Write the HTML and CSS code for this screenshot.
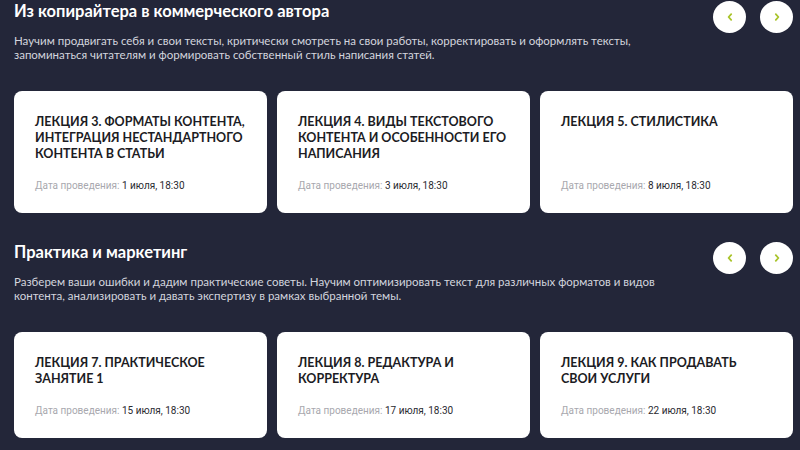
FILE: index.html
```html
<!DOCTYPE html>
<html lang="ru">
<head>
<meta charset="utf-8">
<link rel="stylesheet" href="styles.css">
</head>
<body>
<div class="page">
  <section class="block">
    <div class="head">
      <h2 class="title">Из копирайтера в коммерческого автора</h2>
      <div class="nav">
        <button class="arrow"><svg viewBox="0 0 10 10" width="10" height="10"><path d="M6.2 2.2 L3.6 5 L6.2 7.8" fill="none" stroke="#a9c42b" stroke-width="1.8" stroke-linecap="round" stroke-linejoin="round"/></svg></button>
        <button class="arrow"><svg viewBox="0 0 10 10" width="10" height="10"><path d="M3.8 2.2 L6.4 5 L3.8 7.8" fill="none" stroke="#a9c42b" stroke-width="1.8" stroke-linecap="round" stroke-linejoin="round"/></svg></button>
      </div>
    </div>
    <p class="desc">Научим продвигать себя и свои тексты, критически смотреть на свои работы, корректировать и оформлять тексты,<br>запоминаться читателям и формировать собственный стиль написания статей.</p>
    <div class="cards">
      <div class="card">
        <h3 class="card-title">Лекция 3. Форматы контента, интеграция нестандартного контента в статьи</h3>
        <p class="date"><span class="label">Дата проведения:</span> 1 июля, 18:30</p>
      </div>
      <div class="card">
        <h3 class="card-title">Лекция 4. Виды текстового контента и особенности его написания</h3>
        <p class="date"><span class="label">Дата проведения:</span> 3 июля, 18:30</p>
      </div>
      <div class="card">
        <h3 class="card-title">Лекция 5. Стилистика</h3>
        <p class="date"><span class="label">Дата проведения:</span> 8 июля, 18:30</p>
      </div>
    </div>
  </section>
  <section class="block">
    <div class="head">
      <h2 class="title">Практика и маркетинг</h2>
      <div class="nav">
        <button class="arrow"><svg viewBox="0 0 10 10" width="10" height="10"><path d="M6.2 2.2 L3.6 5 L6.2 7.8" fill="none" stroke="#a9c42b" stroke-width="1.8" stroke-linecap="round" stroke-linejoin="round"/></svg></button>
        <button class="arrow"><svg viewBox="0 0 10 10" width="10" height="10"><path d="M3.8 2.2 L6.4 5 L3.8 7.8" fill="none" stroke="#a9c42b" stroke-width="1.8" stroke-linecap="round" stroke-linejoin="round"/></svg></button>
      </div>
    </div>
    <p class="desc">Разберем ваши ошибки и дадим практические советы. Научим оптимизировать текст для различных форматов и видов<br>контента, анализировать и давать экспертизу в рамках выбранной темы.</p>
    <div class="cards">
      <div class="card">
        <h3 class="card-title">Лекция 7. Практическое занятие 1</h3>
        <p class="date"><span class="label">Дата проведения:</span> 15 июля, 18:30</p>
      </div>
      <div class="card">
        <h3 class="card-title">Лекция 8. Редактура и корректура</h3>
        <p class="date"><span class="label">Дата проведения:</span> 17 июля, 18:30</p>
      </div>
      <div class="card">
        <h3 class="card-title">Лекция 9. Как продавать свои услуги</h3>
        <p class="date"><span class="label">Дата проведения:</span> 22 июля, 18:30</p>
      </div>
    </div>
  </section>
</div>
</body>
</html>
```

FILE: styles.css
```css
* { box-sizing: border-box; }
html, body {
  margin: 0;
  padding: 0;
  background: #232639;
  height: 100%;
  overflow: hidden;
}
.page {
  padding: 0 7px 0 14px;
  margin-top: -1px;
}
.block {
  margin-bottom: 27px;
}
.head {
  display: flex;
  justify-content: space-between;
  align-items: flex-start;
  height: 34px;
}
.title {
  margin: 0;
  font-family: "Lato", "Noto Sans", sans-serif;
  font-weight: 700;
  font-size: 16.5px;
  line-height: 24px;
  color: #ffffff;
}
.nav {
  display: flex;
  gap: 14px;
  margin-top: 2px;
}
.arrow {
  width: 33px;
  height: 32px;
  border-radius: 50%;
  border: none;
  background: #ffffff;
  padding: 0;
  display: flex;
  align-items: center;
  justify-content: center;
}
.arrow svg { display: block; }
.desc {
  margin: 1px 0 0;
  font-family: "Lato", "Noto Sans", sans-serif;
  font-size: 11.5px;
  line-height: 14px;
  color: #d3d5de;
}
.cards {
  display: grid;
  grid-template-columns: repeat(3, 1fr);
  gap: 10px;
  margin-top: 29px;
}
.card {
  background: #ffffff;
  border-radius: 8px;
  padding: 23px 21px 20px;
  display: flex;
  flex-direction: column;
  justify-content: space-between;
}
.card-title {
  margin: 0;
  font-family: "Lato", "Noto Sans", sans-serif;
  font-weight: 700;
  font-size: 12.5px;
  line-height: 16px;
  text-transform: uppercase;
  color: #1c1c24;
}
.date {
  margin: 17px 0 0;
  font-family: "Roboto", "Noto Sans", sans-serif;
  font-size: 10px;
  line-height: 14px;
  color: #2a2a30;
}
.label {
  color: #a8a8ae;
}
```
